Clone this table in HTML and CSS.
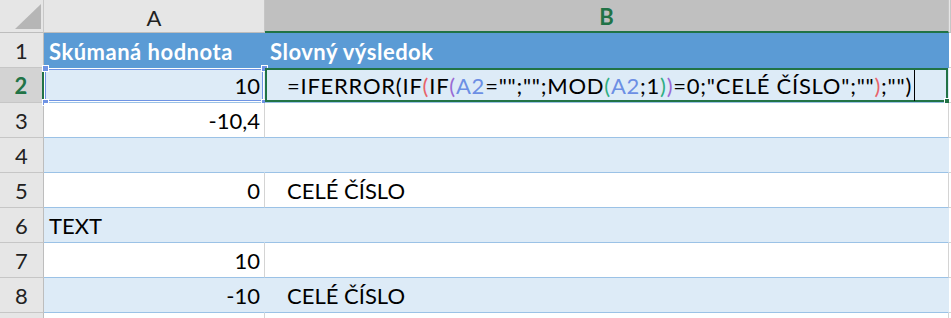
FILE: index.html
```html
<!DOCTYPE html>
<html lang="sk">
<head>
  <meta charset="UTF-8" />
  <meta name="viewport" content="width=device-width, initial-scale=1.0"/>
  <title>Zošit1 - Excel</title>
  <link rel="stylesheet" href="styles.css">
</head>
<body>
  <div class="sheet">
    <!-- column headers -->
    <div class="corner">
      <svg width="44" height="33" viewBox="0 0 44 33"><polygon points="15,29 41,29 41,4" fill="#b6b6b6"/></svg>
    </div>
    <div class="col-head">A</div>
    <div class="col-head active">B</div>
    <div class="col-head rest"></div>

    <!-- row 1: table header -->
    <div class="row-head">1</div>
    <div class="cell th">Skúmaná hodnota</div>
    <div class="cell th">Slovný výsledok</div>
    <div class="cell rest"></div>

    <!-- row 2: formula being edited -->
    <div class="row-head active">2</div>
    <div class="cell num band ref-range">10
      <span class="handle tl"></span><span class="handle tr"></span>
      <span class="handle bl"></span><span class="handle br"></span>
    </div>
    <div class="cell txt band editing">=IFERROR(IF<span class="p1">(</span>IF<span class="p2">(</span><span class="ref">A2</span>="";"";MOD<span class="p3">(</span><span class="ref">A2</span>;1<span class="p3">)</span><span class="p2">)</span>=0;"CELÉ ČÍSLO";""<span class="p1">)</span>;"")<span class="caret"></span>
      <span class="fill-handle"></span>
    </div>
    <div class="cell rest"></div>

    <div class="row-head">3</div>
    <div class="cell num">-10,4</div>
    <div class="cell txt"></div>
    <div class="cell rest"></div>

    <div class="row-head">4</div>
    <div class="cell num band"></div>
    <div class="cell txt band"></div>
    <div class="cell rest"></div>

    <div class="row-head">5</div>
    <div class="cell num">0</div>
    <div class="cell txt">CELÉ ČÍSLO</div>
    <div class="cell rest"></div>

    <div class="row-head">6</div>
    <div class="cell band">TEXT</div>
    <div class="cell txt band"></div>
    <div class="cell rest"></div>

    <div class="row-head">7</div>
    <div class="cell num">10</div>
    <div class="cell txt"></div>
    <div class="cell rest"></div>

    <div class="row-head">8</div>
    <div class="cell num band">-10</div>
    <div class="cell txt band">CELÉ ČÍSLO</div>
    <div class="cell rest"></div>

    <!-- next row, only its top edge shows -->
    <div class="row-head"></div>
    <div class="cell"></div>
    <div class="cell txt"></div>
    <div class="cell rest"></div>
  </div>
</body>
</html>
```

FILE: styles.css
```css
body {
  margin: 0;
  overflow: hidden;
  background: #ffffff;
  font-family: Lato, "Open Sans", sans-serif;
  font-size: 22px;
  color: #000;
}
.sheet {
  display: grid;
  grid-template-columns: 44px 221px 684px 1fr;
  grid-template-rows: 33px;
  grid-auto-rows: 35px;
  width: 951px;
  height: 318px;
  overflow: hidden;
}
.corner {
  background: #e6e6e6;
  border-right: 1px solid #c8c8c8;
  border-bottom: 1px solid #bdbdbd;
  box-sizing: border-box;
}
.corner svg {
  display: block;
}
.col-head {
  background: #e6e6e6;
  border-right: 1px solid #c6c6c6;
  border-bottom: 1px solid #bdbdbd;
  box-sizing: border-box;
  display: flex;
  align-items: center;
  justify-content: center;
  padding-top: 2px;
  color: #222;
}
.col-head.active {
  background: #c0c0c0;
  border-bottom: 2px solid #217346;
  color: #217346;
  font-weight: bold;
}
.col-head.rest {
  background: #e6e6e6;
}
.row-head {
  background: #e6e6e6;
  border-right: 1px solid #bdbdbd;
  border-bottom: 1px solid #c6c6c6;
  box-sizing: border-box;
  display: flex;
  align-items: flex-end;
  justify-content: center;
  padding-bottom: 3px;
  color: #222;
}
.row-head.active {
  background: #d3d3d3;
  border-right: 2px solid #217346;
  color: #217346;
  font-weight: bold;
}
.cell {
  box-sizing: border-box;
  border-bottom: 1px solid #9bc2e6;
  border-right: 1px solid #d4d4d4;
  background: #fff;
  display: flex;
  align-items: flex-end;
  padding: 0 5px 3px 5px;
  white-space: nowrap;
  position: relative;
}
.cell.band {
  background: #ddebf7;
  border-right-color: #ddebf7;
}
.cell.num {
  justify-content: flex-end;
  padding-right: 4px;
}
.cell.txt {
  padding-left: 22px;
}
.cell.th {
  background: #5b9bd5;
  border-right-color: #5b9bd5;
  border-bottom: none;
  color: #fff;
  font-weight: bold;
  letter-spacing: 0.5px;
}
.cell.rest {
  background: #fff;
  border-bottom-color: #d4d4d4;
  border-right: none;
  padding: 0;
}

/* A2 highlighted as the formula's reference */
.ref-range {
  background: #c6d9f1;
  box-shadow: inset 0 0 0 1px #fff, inset 0 0 0 2px #6f93e4;
}
.handle {
  position: absolute;
  width: 5px;
  height: 5px;
  background: #6f93e4;
  border: 1px solid #fff;
}
.handle.tl { left: -2px; top: -3px; }
.handle.tr { right: -4px; top: -3px; }
.handle.bl { left: -2px; bottom: -4px; }
.handle.br { right: -4px; bottom: -4px; }

/* B2 active cell in edit mode */
.editing {
  box-shadow: inset 0 0 0 2px #217346;
  padding-left: 22px;
  letter-spacing: 0.75px;
}
.p1 { color: #e8636b; }
.p2 { color: #9a6ad4; }
.p3 { color: #2fae82; }
.ref { color: #6c8fe4; }
.caret {
  display: inline-block;
  width: 1px;
  height: 31px;
  background: #000;
  margin-left: 2px;
  margin-bottom: -2px;
}
.fill-handle {
  position: absolute;
  right: -3px;
  bottom: -3px;
  width: 5px;
  height: 5px;
  background: #217346;
  border: 1px solid #fff;
}
```
